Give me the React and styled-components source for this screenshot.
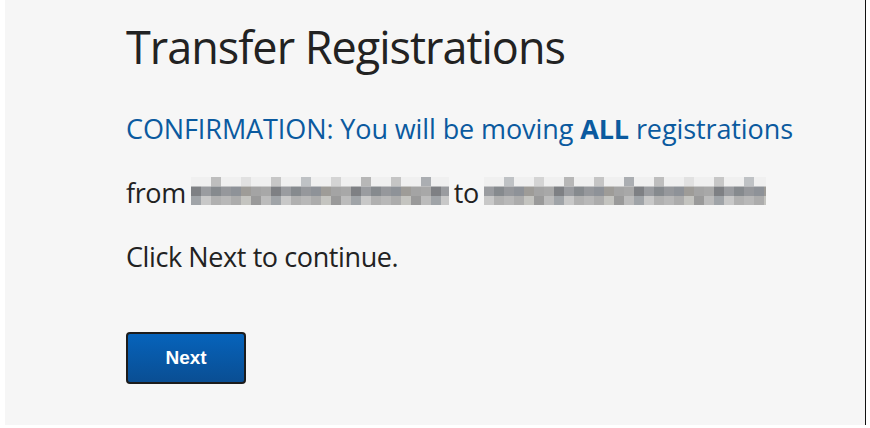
import React from "react";
import styled, { createGlobalStyle } from "styled-components";

const GlobalStyle = createGlobalStyle`
  html, body {
    margin: 0;
    padding: 0;
    background: #ffffff;
  }
`;

const Page = styled.div`
  margin-left: 5px;
  width: 861px;
  height: 425px;
  background: #f6f6f6;
  border-right: 1px solid #111;
  padding: 0 0 0 121px;
  box-sizing: border-box;
  font-family: "Open Sans", "Noto Sans", sans-serif;
  color: #222;
  overflow: hidden;
`;

const Title = styled.h1`
  margin: 0;
  padding-top: 16px;
  font-size: 45px;
  font-weight: 400;
  line-height: 62px;
  color: #222;
  letter-spacing: -1px;
`;

const Content = styled.div`
  margin-top: 19px;
`;

const Line = styled.p`
  margin: 0;
  font-size: 27px;
  line-height: 64px;
  color: ${(p) => p.color || "#222"};
  display: flex;
  align-items: center;
  gap: 5px;
  letter-spacing: ${(p) => p.tight ? "-0.4px" : "-0.1px"};
`;

const Button = styled.button`
  margin-top: 43px;
  width: 120px;
  height: 52px;
  border: 2px solid #1c1c1c;
  border-radius: 4px;
  background: linear-gradient(#0663bb, #0a4e93);
  color: #fff;
  font-family: "Liberation Sans", Arial, sans-serif;
  font-size: 19px;
  font-weight: 700;
  cursor: pointer;
`;

const greys = [
  ["#d8d8d8", "#b4b4b4", "#a8acb0", "#c6c6c6", "#9c9c9c", "#b0b0b0", "#8c9096", "#a6a6a6"],
  ["#a4a4a4", "#9a9ca0", "#8e9298", "#a8a8a8", "#868a8e", "#9e9c98", "#7e8084", "#96989c"],
  ["#bcbcbc", "#b0b0b0", "#c4c4c0", "#a0a4a8", "#b8b8b8", "#9a9a9a", "#c8c8c8", "#acacac"],
];

const Redacted = ({ width, seed = 0 }) => {
  const cols = Math.ceil(width / 10);
  return (
    <svg width={width} height={28} viewBox={`0 0 ${width} 28`} style={{ display: "block" }}>
      {greys.map((row, r) =>
        Array.from({ length: cols }).map((_, c) => {
          const fill = row[(c * 3 + seed + r * 5) % row.length];
          const skipTop = r === 0 && (c + seed) % 3 !== 0;
          return (
            <rect
              key={`${r}-${c}`}
              x={c * 10}
              y={r * 9.5}
              width={10}
              height={9.5}
              fill={skipTop ? "#eeeeee" : fill}
              opacity={r === 0 ? 0.7 : 1}
            />
          );
        })
      )}
    </svg>
  );
};

const Blur = styled.span`
  display: inline-block;
  margin-bottom: 4px;
`;

export default function App() {
  return (
    <>
      <GlobalStyle />
      <Page>
        <Title>Transfer Registrations</Title>
        <Content>
          <Line color="#0b5a9f">
            <span>
              CONFIRMATION: You will be moving <b>ALL</b> registrations
            </span>
          </Line>
          <Line tight>
            from
            <Blur>
              <Redacted width={258} seed={1} />
            </Blur>
            to
            <Blur>
              <Redacted width={282} seed={4} />
            </Blur>
          </Line>
          <Line tight>Click Next to continue.</Line>
        </Content>
        <Button>Next</Button>
      </Page>
    </>
  );
}
